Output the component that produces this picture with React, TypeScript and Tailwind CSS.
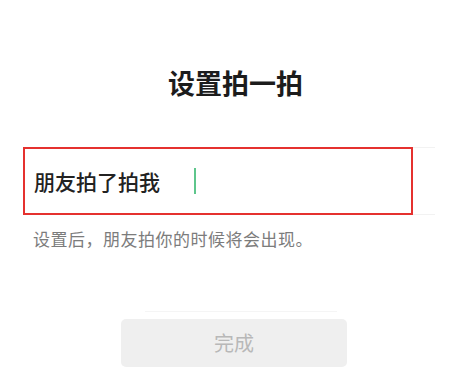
import React from "react";

export default function App() {
  const font = { fontFamily: '"Noto Sans CJK SC", "Noto Sans", sans-serif' };
  return (
    <div className="w-[469px] h-[371px] bg-white overflow-hidden flex flex-col" style={font}>
      <div className="mt-[63px] h-[40px] leading-[40px] text-center text-[27px] font-bold text-[#1c1c1c] pl-[2px]">
        设置拍一拍
      </div>
      <div className="relative mt-[44px] ml-[23px] w-[412px] h-[68px] border-y border-[#f2f2f2] flex items-center">
        <div className="absolute left-0 top-[-1px] w-[390px] h-[68px] border-2 border-[#e5312f]" />
        <span className="ml-[11px] text-[21px] font-medium text-[#222] leading-none">朋友拍了拍我</span>
        <span className="ml-[34px] w-[2px] h-[26px] bg-[#5ec68c]" />
      </div>
      <div className="mt-[14px] ml-[33px] text-[17px] leading-[20px] tracking-[0.5px] text-[#7c7c7c]">
        设置后，朋友拍你的时候将会出现。
      </div>
      <div className="mt-[62px] ml-[145px] w-[192px] h-px bg-[#f5f5f5]" />
      <div className="mt-[7px] ml-[121px] w-[226px] h-[48px] rounded-[5px] bg-[#efefef] flex items-center justify-center text-[20px] text-[#b8b8b8]">
        完成
      </div>
    </div>
  );
}
